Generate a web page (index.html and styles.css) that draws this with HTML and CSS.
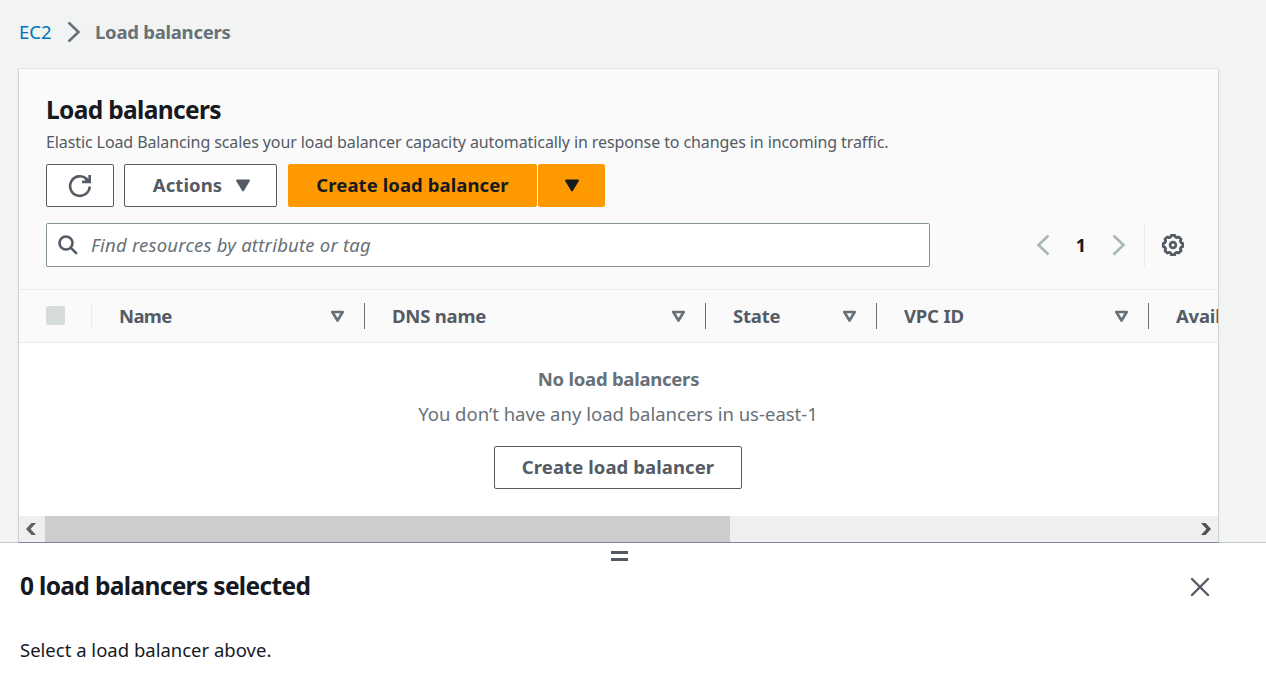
FILE: index.html
```
<!DOCTYPE html>
<html lang="en">
<head>
<meta charset="utf-8">
<title>Load balancers | EC2</title>
<link rel="stylesheet" href="styles.css">
</head>
<body>
<div class="app">
  <main class="content">
    <nav class="breadcrumbs">
      <a class="crumb-link" href="#">EC2</a>
      <svg class="crumb-sep" width="14" height="22" viewBox="0 0 14 22"><path d="M1.5 1.5 11.5 11 1.5 20.5" fill="none" stroke="#687078" stroke-width="2.6"/></svg>
      <span class="crumb-current">Load balancers</span>
    </nav>

    <section class="card">
      <header class="card-header">
        <h1 class="title">Load balancers</h1>
        <p class="description">Elastic Load Balancing scales your load balancer capacity automatically in response to changes in incoming traffic.</p>
        <div class="actions">
          <button class="btn btn-icon" aria-label="Refresh">
            <svg width="24" height="24" viewBox="0 0 24 24" fill="none" stroke="#545b64" stroke-width="2.6"><path d="M21.700 12.500a9.800 9.800 0 1 1-3-7.500l2 2"/><path d="M21.700 1v6.900h-7.600"/><path d="M17.500 4.500 20.500 7.500"/></svg>
          </button>
          <button class="btn btn-menu"><span>Actions</span>
            <svg width="16" height="13" viewBox="0 0 16 13"><path d="M2 1.5h12L8 11.500z" fill="#545b64" stroke="#545b64" stroke-width="1.800" stroke-linejoin="round"/></svg>
          </button>
          <div class="btn-split">
            <button class="btn btn-primary">Create load balancer</button>
            <button class="btn btn-primary btn-caret" aria-label="More create options">
              <svg width="16" height="13" viewBox="0 0 16 13"><path d="M2 1.500h12L8 11.500z" fill="#16191f" stroke="#16191f" stroke-width="1.800" stroke-linejoin="round"/></svg>
            </button>
          </div>
        </div>
        <div class="tools">
          <label class="search">
            <svg width="20" height="20" viewBox="0 0 20 20" fill="none" stroke="#545b64" stroke-width="2.600"><circle cx="8" cy="8" r="6.500"/><path d="m12.600 12.600 6.300 6.300"/></svg>
            <span class="placeholder">Find resources by attribute or tag</span>
          </label>
          <div class="pager">
            <svg width="14" height="22" viewBox="0 0 14 22"><path d="M12.500 1.500 2.500 11l10 9.500" fill="none" stroke="#aab7b8" stroke-width="2.600"/></svg>
            <span class="page">1</span>
            <svg width="14" height="22" viewBox="0 0 14 22"><path d="M1.500 1.500 11.500 11l-10 9.500" fill="none" stroke="#aab7b8" stroke-width="2.600"/></svg>
          </div>
          <div class="settings">
            <svg width="24" height="24" viewBox="0 0 24 24" fill="none" stroke="#545b64" stroke-width="2.700" stroke-linejoin="round"><path d="M10.200 2.300h3.600l.6 1.800 1.500.6 1.800-.8 2.400 2.400-.8 1.800.6 1.500 1.800.6v3.600l-1.800.6-.6 1.500.8 1.800-2.400 2.400-1.800-.8-1.500.6-.6 1.800h-3.600l-.6-1.800-1.500-.6-1.800.8-2.400-2.400.8-1.800-.6-1.500-1.800-.6v-3.600l1.800-.6.6-1.500-.8-1.800 2.400-2.400 1.800.8 1.500-.6z"/><circle cx="12" cy="12" r="2.900"/></svg>
          </div>
        </div>
      </header>

      <div class="thead">
        <div class="th th-select"><span class="checkbox"></span></div>
        <div class="th th-name"><span class="label-name">Name</span><svg class="sort" width="15" height="13" viewBox="0 0 15 13"><path d="M2.300 2h10.400L7.500 10.500z"/></svg></div>
        <div class="th th-dns"><span>DNS name</span><svg class="sort" width="15" height="13" viewBox="0 0 15 13"><path d="M2.300 2h10.400L7.500 10.500z"/></svg></div>
        <div class="th th-state"><span>State</span><svg class="sort" width="15" height="13" viewBox="0 0 15 13"><path d="M2.300 2h10.400L7.500 10.500z"/></svg></div>
        <div class="th th-vpc"><span>VPC ID</span><svg class="sort" width="15" height="13" viewBox="0 0 15 13"><path d="M2.300 2h10.400L7.500 10.500z"/></svg></div>
        <div class="th th-zones"><span>Avail</span></div>
      </div>

      <div class="empty">
        <strong class="empty-title">No load balancers</strong>
        <span class="empty-text">You don’t have any load balancers in us-east-1</span>
        <button class="btn btn-wide">Create load balancer</button>
      </div>

      <div class="scrollbar">
        <svg width="26" height="26" viewBox="0 0 26 26"><path d="M12.500 7H17l-5.500 6 5.500 6h-4.500L7 13z" fill="#606060"/></svg>
        <div class="track"><div class="thumb"></div></div>
        <svg width="26" height="26" viewBox="0 0 26 26"><path d="M13.500 7H9l5.500 6L9 19h4.500l5.500-6z" fill="#505050"/></svg>
      </div>
    </section>
  </main>

  <section class="split-panel">
    <div class="handle"><span></span><span></span></div>
    <div class="panel-header">
      <h2 class="title">0 load balancers selected</h2>
      <svg width="20" height="20" viewBox="0 0 20 20"><path d="m2 2 16 16M18 2 2 18" fill="none" stroke="#545b64" stroke-width="2.400" stroke-linecap="round"/></svg>
    </div>
    <p class="panel-text">Select a load balancer above.</p>
  </section>
</div>
</body>
</html>
```
FILE: styles.css
```
* { box-sizing: border-box; }

body {
  margin: 0;
  background: #f2f3f3;
  color: #16191f;
  font: 400 18.5px/26px "Noto Sans", "Open Sans", sans-serif;
}

h1, h2, p { margin: 0; }
svg { display: block; flex: none; }

.app {
  display: flex;
  flex-direction: column;
  height: 700px;
  overflow: hidden;
}

.content {
  flex: none;
  height: 543px;
  padding: 0 48px 0 19px;
  border-bottom: 1px solid #c6cacb;
}

.breadcrumbs {
  display: flex;
  align-items: center;
  height: 69px;
  padding-bottom: 5px;
}
.crumb-link { width: 48px; color: #0073bb; text-decoration: none; }
.crumb-sep { margin-right: 14px; }
.crumb-current { color: #687078; font-weight: 700; letter-spacing: -.25px; }

.card {
  width: 1199px;
  height: 474px;
  background: #fff;
  border-bottom: 1px solid #7d8998;
  box-shadow: 0 0 1px 0 rgba(0, 28, 36, .4), 0 1px 2px rgba(0, 28, 36, .25);
}

.card-header {
  height: 221px;
  padding: 26px 34px 0 27px;
  background: #fafafa;
  border-bottom: 1px solid #eaeded;
}

.title {
  font-size: 24.5px;
  line-height: 30px;
  font-weight: 700;
  letter-spacing: -.66px;
}

.description {
  margin-top: 6px;
  color: #545b64;
  font-size: 16px;
  line-height: 22px;
  letter-spacing: -.1px;
  white-space: nowrap;
}

.actions {
  display: flex;
  gap: 11px;
  margin-top: 11px;
}

.btn {
  display: flex;
  align-items: center;
  justify-content: center;
  height: 43px;
  padding: 0 0 2px;
  border: 1px solid #545b64;
  border-radius: 2px;
  background: #fff;
  color: #545b64;
  font: 700 18.5px/26px "Noto Sans", "Open Sans", sans-serif;
  letter-spacing: .08px;
  white-space: nowrap;
}
.btn svg { position: relative; top: 1px; }
.btn-icon { width: 68px; margin-right: -1px; }
.btn-menu { width: 153px; gap: 13px; padding-left: 3px; }
.btn-split { display: flex; gap: 1px; }
.btn-primary {
  width: 249px;
  border-color: #f90;
  background: #f90;
  color: #16191f;
}
.btn-caret { width: 67px; }
.btn-wide { width: 248px; margin-right: 1px; }

.tools {
  display: flex;
  align-items: center;
  height: 44px;
  margin-top: 16px;
}

.search {
  display: flex;
  flex: none;
  align-items: center;
  gap: 13px;
  width: 884px;
  height: 44px;
  padding-left: 11px;
  border: 1px solid #879596;
  border-radius: 2px;
  background: #fff;
}
.placeholder {
  color: #687078;
  font-style: italic;
  letter-spacing: .21px;
}

.pager {
  display: flex;
  flex: none;
  align-items: center;
  justify-content: space-between;
  width: 90px;
  margin-left: 106px;
}
.page { font-weight: 700; font-size: 18px; }

.settings {
  display: flex;
  flex: none;
  align-items: center;
  height: 43px;
  margin-left: 18px;
  padding-left: 16px;
  border-left: 1px solid #eaeded;
}

.thead {
  display: flex;
  align-items: center;
  height: 53px;
  overflow: hidden;
  background: #fafafa;
  border-bottom: 1px solid #eaeded;
  color: #545b64;
  font-weight: 700;
  letter-spacing: -.2px;
}
.th {
  display: flex;
  flex: none;
  align-items: center;
  justify-content: space-between;
  height: 26px;
  padding: 0 19px 0 27px;
  border-right: 1px solid #687078;
  white-space: nowrap;
}
.th-select { width: 73px; border-color: #eaeded; }
.th-name { width: 273px; }
.th-dns { width: 341px; }
.th-state { width: 171px; }
.th-vpc { width: 272px; }
.th-zones { padding-right: 0; border-right: 0; }
.label-name { letter-spacing: -.65px; }

.sort path {
  fill: none;
  stroke: #687078;
  stroke-width: 2.7;
  stroke-linejoin: round;
}

.checkbox {
  width: 19px;
  height: 19px;
  margin-bottom: 1px;
  border-radius: 2px;
  background: #d5dbdb;
}

.empty {
  display: flex;
  flex-direction: column;
  align-items: center;
  height: 173px;
  padding-top: 23px;
  color: #687078;
}
.empty-title { font-weight: 700; letter-spacing: -.25px; }
.empty-text { margin: 9px 1px 19px 0; }

.scrollbar {
  display: flex;
  height: 26px;
  background: #efefef;
}
.track { flex: 1; }
.thumb { width: 685px; height: 26px; background: #cdcdcd; }

.split-panel {
  position: relative;
  flex: 1;
  background: #fff;
}

.handle {
  display: flex;
  flex-direction: column;
  align-items: center;
  gap: 4px;
  height: 26px;
  padding: 8px 28px 0 0;
}
.handle span { width: 17px; height: 3px; background: #545b64; }

.panel-header {
  display: flex;
  align-items: center;
  justify-content: space-between;
  height: 34px;
  padding: 0 56px 0 20px;
}
.panel-header svg { margin-top: 2px; }
.panel-text { padding: 34px 20px 0; }
```
